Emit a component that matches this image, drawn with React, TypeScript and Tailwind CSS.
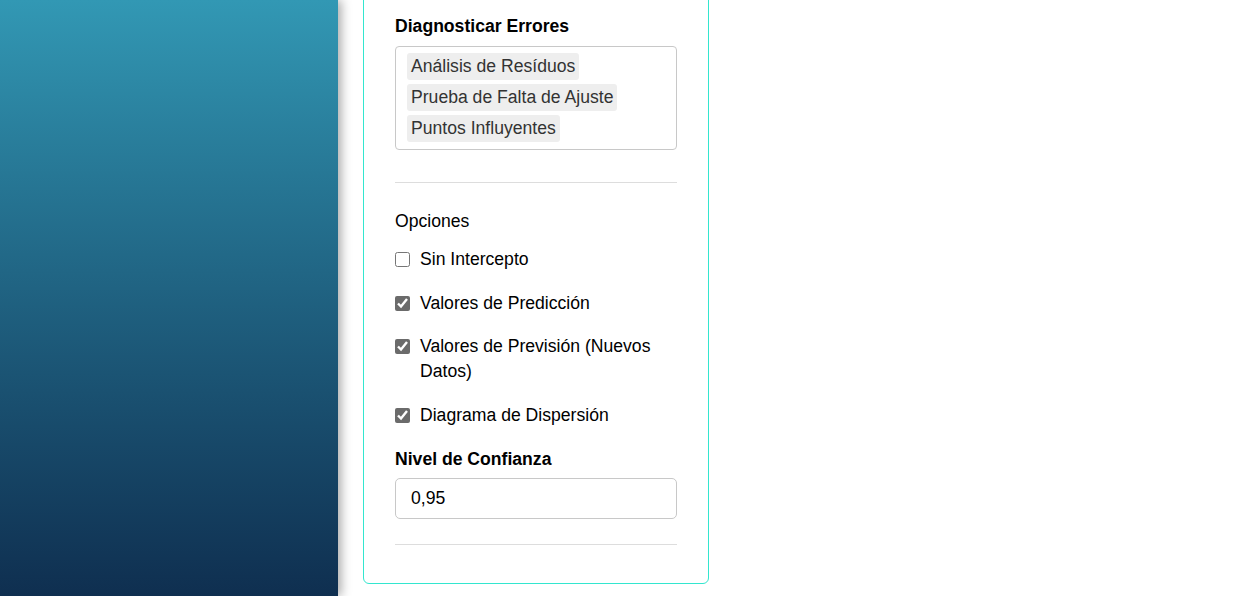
import React from "react";

const chips = ["Análisis de Resíduos", "Prueba de Falta de Ajuste", "Puntos Influyentes"];

const options: { label: string; checked: boolean }[] = [
  { label: "Sin Intercepto", checked: false },
  { label: "Valores de Predicción", checked: true },
  { label: "Valores de Previsión (Nuevos Datos)", checked: true },
  { label: "Diagrama de Dispersión", checked: true },
];

export default function App() {
  return (
    <div
      className="flex h-[596px] w-full overflow-hidden bg-white text-black"
      style={{ fontFamily: '"Liberation Sans", Arial, sans-serif' }}
    >
      <aside className="relative z-10 h-[596px] w-[338px] shrink-0 bg-gradient-to-b from-[#3298b4] to-[#0f2f50] shadow-[3px_0_10px_rgba(0,0,0,0.35)]" />
      <main className="flex-1 pl-[25px]">
        <div className="-mt-[20px] w-[346px] rounded-[6px] border border-[#33e6cf] bg-white px-[31px] pt-[32px] pb-[38px]">
          <h3 className="text-[17.6px] font-bold leading-[26px]">Diagnosticar Errores</h3>
          <div className="mt-[7px] flex flex-col items-start gap-[4px] rounded-[4px] border border-[#c8c8c8] px-[11px] pt-[6px] pb-[7px]">
            {chips.map((c) => (
              <span
                key={c}
                className="rounded-[3px] bg-[#eeeeee] px-[4px] py-[4px] text-[17.6px] leading-[19px] text-[#333333]"
              >
                {c}
              </span>
            ))}
          </div>
          <div className="mt-[32px] h-px bg-[#dddddd]" />
          <div className="mt-[26px] text-[17.6px] leading-[25px]">Opciones</div>
          <div className="mt-[13px] flex flex-col gap-[18.5px]">
            {options.map((o) => (
              <label key={o.label} className="flex items-start gap-[10px] text-[17.6px] leading-[25px]">
                <input
                  type="checkbox"
                  defaultChecked={o.checked}
                  className="mt-[5px] h-[15px] w-[15px] shrink-0 accent-[#6b6b6b]"
                />
                <span>{o.label}</span>
              </label>
            ))}
          </div>
          <h3 className="mt-[18.5px] text-[17.6px] font-bold leading-[26px]">Nivel de Confianza</h3>
          <input
            type="text"
            defaultValue="0,95"
            className="mt-[6px] block h-[41px] w-full rounded-[5px] border border-[#c8c8c8] px-[15px] text-[17.6px] text-black outline-none"
          />
          <div className="mt-[25px] h-px bg-[#dddddd]" />
        </div>
      </main>
    </div>
  );
}
